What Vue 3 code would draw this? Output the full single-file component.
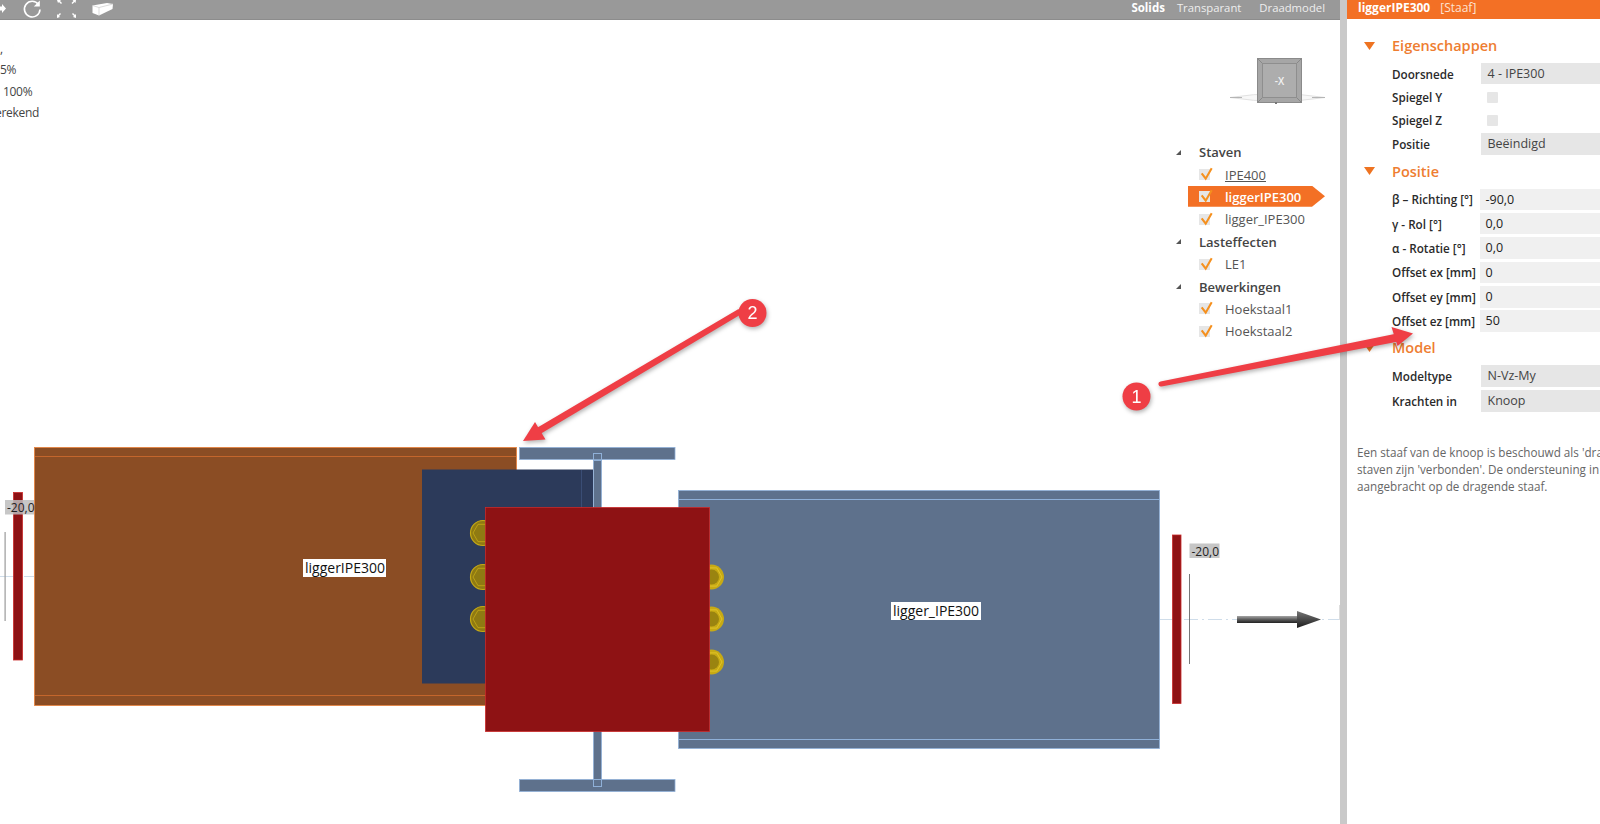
<script setup>
const infoLines = [
  { text: ',', cls: 'i0' },
  { text: '5%', cls: 'i1' },
  { text: '100%', cls: 'i2' },
  { text: 'erekend', cls: 'i3' },
]

const tree = [
  { type: 'group', label: 'Staven' },
  { type: 'item', label: 'IPE400', underline: true },
  { type: 'item', label: 'liggerIPE300', selected: true },
  { type: 'item', label: 'ligger_IPE300' },
  { type: 'group', label: 'Lasteffecten' },
  { type: 'item', label: 'LE1' },
  { type: 'group', label: 'Bewerkingen' },
  { type: 'item', label: 'Hoekstaal1' },
  { type: 'item', label: 'Hoekstaal2' },
]

const sections = [
  {
    title: 'Eigenschappen',
    cls: 'sec-a',
    rows: [
      { label: 'Doorsnede', value: '4 - IPE300', kind: 'select' },
      { label: 'Spiegel Y', kind: 'check' },
      { label: 'Spiegel Z', kind: 'check' },
      { label: 'Positie', value: 'Beëindigd', kind: 'select' },
    ],
  },
  {
    title: 'Positie',
    cls: 'sec-b',
    rows: [
      { label: 'β – Richting [°]', value: '-90,0', kind: 'input' },
      { label: 'γ - Rol [°]', value: '0,0', kind: 'input' },
      { label: 'α - Rotatie [°]', value: '0,0', kind: 'input' },
      { label: 'Offset ex [mm]', value: '0', kind: 'input' },
      { label: 'Offset ey [mm]', value: '0', kind: 'input' },
      { label: 'Offset ez [mm]', value: '50', kind: 'input' },
    ],
  },
  {
    title: 'Model',
    cls: 'sec-c',
    rows: [
      { label: 'Modeltype', value: 'N-Vz-My', kind: 'select' },
      { label: 'Krachten in', value: 'Knoop', kind: 'select' },
    ],
  },
]

const leftBolts = [533, 577, 619]
const rightBolts = [577, 619, 662]

function hexPoints(cx, cy, r) {
  const pts = []
  for (let i = 0; i < 6; i++) {
    const a = (Math.PI / 3) * i
    pts.push(`${(cx + r * Math.cos(a)).toFixed(1)},${(cy + r * Math.sin(a)).toFixed(1)}`)
  }
  return pts.join(' ')
}
</script>

<template>
  <div class="app">
    <section class="viewport">
      <div class="toolbar">
        <div class="tools">
          <svg width="120" height="19" viewBox="0 0 120 19">
            <path d="M0 6.500h2V4l4 4.500-4 4.500v-2.500H0z" fill="#fff" />
            <path d="M38.500 4.500A7.800 7.800 0 1 0 40 9.500" fill="none" stroke="#fff" stroke-width="1.600" />
            <path d="M39.800 0.500v6h-6z" fill="#fff" />
            <path d="M57 0l4 0-1 1 2 2-1 1-2-2-1 1zM76 0l-3.500 0 1 1-2 2 1 1 2-2 1 1zM57 18l0-4 1 1 2-2 1 1-2 2 1 1zM76 18l0-4-1 1-2-2-1 1 2 2-1 1z" fill="#fff" />
            <path d="M92.500 5.500L107 3l6 1-.5 5-13.500 6.500-6.500-2.500z" fill="#fff" />
            <path d="M99 7.500v8M92.500 5.500L99 7.500l14-3.500" fill="none" stroke="#ccc" stroke-width=".7" />
          </svg>
        </div>
        <div class="modes">
          <span class="mode active">Solids</span>
          <span class="mode">Transparant</span>
          <span class="mode">Draadmodel</span>
        </div>
      </div>

      <svg class="scene" viewBox="0 0 1340 824" width="1340" height="824">
        <!-- centre lines and end markers -->
        <line x1="0" y1="576.500" x2="34" y2="576.500" class="axis" />
        <line x1="1160" y1="619.500" x2="1340" y2="619.500" class="axis" />
        <rect x="4.500" y="532" width="1.200" height="89" fill="#9a9a9a" />
        <rect x="1189" y="574" width="1" height="90" fill="#777" />

        <rect x="13.500" y="492.500" width="9" height="167.500" class="red" />
        <rect x="1172.500" y="535" width="8.500" height="168.500" class="red" />

        <!-- left member -->
        <rect x="34.500" y="447.500" width="482" height="258" fill="#8b4d24" stroke="#e8803a" stroke-width=".8" />
        <line x1="35" y1="456.500" x2="516" y2="456.500" stroke="#c4662c" />
        <line x1="35" y1="695.500" x2="516" y2="695.500" stroke="#c4662c" />

        <!-- right member -->
        <rect x="678.500" y="490.500" width="481" height="258" class="steel" />
        <line x1="679" y1="499.500" x2="1159" y2="499.500" stroke="#8fb0d8" />
        <line x1="679" y1="739.500" x2="1159" y2="739.500" stroke="#8fb0d8" />

        <!-- column section -->
        <rect x="593.500" y="453.500" width="8" height="332" class="steel" />
        <rect x="519.500" y="447.500" width="155.500" height="12" class="steel" />
        <rect x="519.500" y="779.500" width="155.500" height="12" class="steel" />
        <rect x="593.500" y="453.500" width="8" height="7" fill="none" stroke="#8fb0d8" />
        <rect x="593.500" y="779.500" width="8" height="7" fill="none" stroke="#8fb0d8" />

        <!-- angle cleat -->
        <rect x="422" y="469.500" width="171" height="214" fill="#2c3a5a" />
        <line x1="581.500" y1="470" x2="581.500" y2="683" stroke="#3a4d75" />

        <g v-for="y in leftBolts" :key="'l' + y">
          <circle cx="483" :cy="y" r="12.500" fill="#8f7a12" stroke="#c7aa14" stroke-width="1.200" />
          <polygon :points="hexPoints(483, y, 10)" fill="none" stroke="#c7aa14" stroke-width=".8" />
        </g>
        <g v-for="y in rightBolts" :key="'r' + y">
          <circle cx="711.500" :cy="y" r="12.500" fill="#c7aa14" />
          <polygon :points="hexPoints(711.500, y, 10.500)" fill="none" stroke="#e6c92e" stroke-width=".8" />
          <circle cx="711.500" :cy="y" r="7.500" fill="#9a8410" />
        </g>

        <rect x="485.500" y="507.500" width="224" height="224" class="red" />

        <!-- support arrow -->
        <defs>
          <linearGradient id="shaft" x1="0" y1="0" x2="0" y2="1">
            <stop offset="0" stop-color="#a5a5a5" />
            <stop offset=".55" stop-color="#555" />
            <stop offset="1" stop-color="#222" />
          </linearGradient>
          <linearGradient id="head" x1="0" y1="0" x2="0" y2="1">
            <stop offset="0" stop-color="#777" />
            <stop offset="1" stop-color="#1c1c1c" />
          </linearGradient>
        </defs>
        <rect x="1237" y="616" width="60" height="7" fill="url(#shaft)" />
        <polygon points="1297,611 1321,619.500 1297,628" fill="url(#head)" />

        <!-- labels -->
        <rect x="5" y="500" width="29" height="14.500" fill="#bdbdbd" fill-opacity=".85" />
        <text x="7" y="512" class="tag">-20,0</text>
        <rect x="1189.500" y="543.500" width="30" height="14.500" fill="#c6c6c6" />
        <text x="1191.500" y="555.500" class="tag">-20,0</text>
        <rect x="303" y="559" width="83" height="18" fill="#fff" />
        <text x="305" y="573" class="name">liggerIPE300</text>
        <rect x="891" y="602" width="90" height="18" fill="#fff" />
        <text x="893" y="616" class="name">ligger_IPE300</text>

        <!-- view cube -->
        <path d="M1230 97.500Q1277 90 1325 97.500Q1277 105 1230 97.500z" fill="#f8f8f8" stroke="#e2e2e2" />
        <path d="M1230 97.500h12M1312 97.500h13" stroke="#b5b5b5" />
        <rect x="1257.500" y="58.500" width="44" height="44" fill="#a6a6a6" stroke="#8a8a8a" />
        <path d="M1258 59l5 5M1301 59l-5 5M1258 102l5-5M1301 102l-5-5" stroke="#888" />
        <rect x="1262.500" y="63.500" width="34" height="34" fill="#adadad" stroke="#8e8e8e" />
        <text x="1279.500" y="85" text-anchor="middle" class="cube">-X</text>
        <rect x="1275" y="102" width="2" height="2" fill="#777" />
      </svg>

      <div class="info">
        <div v-for="line in infoLines" :key="line.cls" class="info-line" :class="line.cls">{{ line.text }}</div>
      </div>

      <ul class="tree">
        <li
          v-for="node in tree"
          :key="node.label"
          class="node"
          :class="[node.type, { selected: node.selected }]"
        >
          <template v-if="node.type === 'group'">
            <svg class="caret" width="7" height="7" viewBox="0 0 7 7"><path d="M6 1v5H1z" fill="#555" /></svg>
            <span class="group-label">{{ node.label }}</span>
          </template>
          <template v-else>
            <span class="check">
              <svg width="16" height="16" viewBox="0 0 16 16">
                <path d="M3.700 7.300l4 5.400 6-10.400" fill="none" stroke="#f5901e" stroke-width="2.100" />
              </svg>
            </span>
            <span class="item-label" :class="{ underline: node.underline }">{{ node.label }}</span>
          </template>
        </li>
      </ul>
    </section>

    <div class="splitter"></div>

    <aside class="panel">
      <header class="panel-head">
        <strong>liggerIPE300</strong>
        <span>[Staaf]</span>
      </header>

      <div v-for="sec in sections" :key="sec.title" class="section" :class="sec.cls">
        <h2 class="section-title">
          <svg class="section-caret" width="11" height="8" viewBox="0 0 11 8"><path d="M0 0h11L5.500 8z" /></svg>
          {{ sec.title }}
        </h2>
        <div v-for="row in sec.rows" :key="row.label" class="row">
          <span class="row-label">{{ row.label }}</span>
          <span v-if="row.kind === 'check'" class="box"></span>
          <span v-else class="field" :class="row.kind">{{ row.value }}</span>
        </div>
      </div>

      <p class="note">
        Een staaf van de knoop is beschouwd als 'dragend'. De andere<br />
        staven zijn 'verbonden'. De ondersteuning in het model wordt<br />
        aangebracht op de dragende staaf.
      </p>
    </aside>

    <!-- callouts drawn over the whole screenshot -->
    <svg class="callouts" viewBox="0 0 1600 824" width="1600" height="824">
      <g class="callout">
        <path d="M1160.500 381.500L1397 333.500l1.500 8L1161.500 386.500a2.500 2.500 0 0 1-1-5z" class="fill" />
        <polygon points="1413,333.500 1391.500,327 1397.500,346" class="fill" />
        <circle cx="1136.500" cy="396.500" r="14" class="fill" />
        <text x="1136.500" y="402.500" text-anchor="middle" class="num">1</text>
      </g>
      <g class="callout">
        <path d="M738.500 309L535 429l3.500 6L741.500 314z" class="fill" />
        <polygon points="523,441 535,422 545.500,439.500" class="fill" />
        <circle cx="752.500" cy="313" r="14" class="fill" />
        <text x="752.500" y="319" text-anchor="middle" class="num">2</text>
      </g>
    </svg>
  </div>
</template>

<style>
html,
body {
  margin: 0;
  background: #fff;
}
</style>

<style scoped>
.app {
  position: relative;
  display: flex;
  width: 1600px;
  height: 824px;
  overflow: hidden;
  background: #fff;
  font-family: "Open Sans", "Noto Sans", sans-serif;
  font-size: 12.500px;
  color: #333;
}

.viewport {
  position: relative;
  flex: 0 0 1340px;
  overflow: hidden;
}

.toolbar {
  position: relative;
  z-index: 1;
  display: flex;
  justify-content: space-between;
  height: 19px;
  background: #999;
  border-bottom: 1px solid #8c8c8c;
  color: #fff;
}

.tools svg {
  display: block;
}

.modes {
  display: flex;
  gap: 18px;
  padding-right: 15px;
  line-height: 16px;
}

.mode {
  color: #eee;
  font-size: 11.300px;
}

.mode.active {
  margin-right: -6px;
  color: #fff;
  font-size: 11.500px;
  font-weight: 700;
}

.scene {
  position: absolute;
  inset: 0;
}

.axis {
  stroke: #c3d4e4;
  stroke-width: 0.800;
  stroke-dasharray: 14 4 2 4;
}

.red {
  fill: #8e1214;
  stroke: #c92a2a;
  stroke-width: 0.800;
}

.steel {
  fill: #5e718c;
  stroke: #8fb0d8;
  stroke-width: 0.800;
}

.tag {
  font-size: 12px;
  fill: #222;
}

.name {
  font-size: 14px;
  fill: #111;
}

.cube {
  font-size: 10px;
  font-weight: 600;
  fill: #f2f2f2;
}

.info {
  position: absolute;
  top: 37.500px;
  left: 0;
  color: #444;
  font-size: 12px;
  letter-spacing: -0.300px;
}

.info-line {
  height: 21.500px;
  line-height: 21.500px;
  white-space: nowrap;
}

.i2 {
  padding-left: 3px;
}

.i3 {
  margin-left: -5px;
}

.tree {
  position: absolute;
  top: 141px;
  left: 1172px;
  width: 154px;
  margin: 0;
  padding: 0;
  list-style: none;
  font-size: 13px;
}

.node {
  display: flex;
  align-items: center;
  height: 22.400px;
  white-space: nowrap;
}

.caret {
  margin: 0 17px 0 3px;
}

.group-label {
  font-weight: 600;
  color: #444;
}

.item {
  padding-left: 27px;
}

.check {
  position: relative;
  flex: none;
  width: 11px;
  height: 11px;
  margin-right: 15px;
  background: #e6e6e6;
}

.check svg {
  position: absolute;
  top: -3px;
  left: -1px;
}

.item-label {
  color: #555;
}

.underline {
  text-decoration: underline;
}

.node.selected {
  position: relative;
  z-index: 0;
}

.node.selected::before {
  content: '';
  position: absolute;
  z-index: -1;
  top: 0;
  left: 16px;
  width: 137px;
  height: 21px;
  background: #f37025;
  clip-path: polygon(0 0, 124px 0, 100% 50%, 124px 100%, 0 100%);
}

.node.selected .item-label {
  color: #fff;
  font-weight: 600;
}

.splitter {
  position: relative;
  flex: 0 0 7px;
  background: #c9c9c9;
}

.splitter::after {
  content: '';
  position: absolute;
  top: 605px;
  left: -1px;
  width: 1px;
  height: 15px;
  background: #ddd;
}

.panel {
  flex: 1;
  min-width: 0;
  overflow: hidden;
}

.panel-head {
  display: flex;
  gap: 10px;
  height: 19px;
  padding-left: 11px;
  background: #f37025;
  color: #fde2d2;
  line-height: 16px;
  font-size: 12px;
}

.panel-head strong {
  color: #fff;
  font-weight: 700;
}

.section {
  padding-left: 17px;
}

.section-title {
  display: flex;
  align-items: center;
  height: 22px;
  margin: 0;
  color: #ee7d31;
  font-size: 14.500px;
  font-weight: 600;
}

.section-caret {
  flex: none;
  margin-right: 17px;
  fill: #ee7321;
}

.sec-a {
  padding-top: 15.500px;
}

.sec-a .section-title {
  margin-bottom: 5.500px;
}

.sec-a .row {
  height: 23.400px;
}

.sec-b {
  padding-top: 4.500px;
}

.sec-b .section-title {
  margin-bottom: 5px;
}

.sec-b .row {
  height: 24.400px;
}

.sec-c {
  padding-top: 3.500px;
}

.sec-c .section-title {
  margin-bottom: 4.500px;
}

.sec-c .row {
  height: 25px;
}

.row {
  display: flex;
  align-items: center;
  padding-left: 28px;
}

.row-label {
  flex: 0 0 88.500px;
  color: #2a2a2a;
  font-weight: 600;
  font-size: 11.700px;
  white-space: nowrap;
}

.field {
  flex: 1;
  height: 21.500px;
  padding-left: 7px;
  line-height: 21.500px;
  background: #e6e6e6;
  color: #444;
}

.field.input {
  margin-left: -1px;
  background: #f0f0f0;
  color: #222;
  padding-left: 6px;
}

.box {
  width: 11px;
  height: 11px;
  margin-left: 6px;
  border-radius: 1px;
  background: #e6e6e6;
}

.note {
  margin: 30.500px 0 0 10px;
  width: 400px;
  color: #666;
  font-size: 11.700px;
  line-height: 17px;
  white-space: nowrap;
}

.callouts {
  position: absolute;
  inset: 0;
  pointer-events: none;
}

.callout {
  filter: drop-shadow(1px 2px 2px rgba(0, 0, 0, 0.3));
}

.fill {
  fill: #ef3e45;
}

.num {
  fill: #fff;
  font-size: 18px;
  font-family: "Liberation Sans", sans-serif;
}
</style>
